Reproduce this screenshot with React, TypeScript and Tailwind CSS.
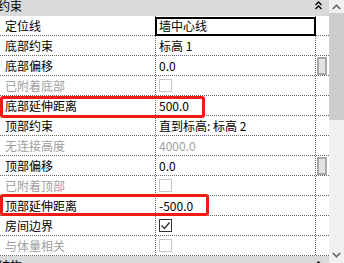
import React from "react";

const font = { fontFamily: '"Noto Sans CJK SC", "Noto Sans", sans-serif' };

function Box({ checked = false, disabled = false }: { checked?: boolean; disabled?: boolean }) {
  return (
    <div
      className={`w-[13px] h-[13px] border bg-white flex items-center justify-center ${
        disabled ? "border-[#c8c8c8]" : "border-[#333333]"
      }`}
    >
      {checked && (
        <svg width="11" height="11" viewBox="0 0 11 11">
          <polyline points="1.5,5.5 4.5,8.5 9.5,2.5" fill="none" stroke="#333" strokeWidth="1.4" />
        </svg>
      )}
    </div>
  );
}

type Row = {
  label: string;
  dim?: boolean;
  value?: string;
  valueDim?: boolean;
  box?: "off" | "on";
  btn?: boolean;
  selected?: boolean;
};

const rows: Row[] = [
  { label: "定位线", value: "墙中心线", selected: true },
  { label: "底部约束", value: "标高 1" },
  { label: "底部偏移", value: "0.0", btn: true },
  { label: "已附着底部", dim: true, box: "off" },
  { label: "底部延伸距离", value: "500.0" },
  { label: "顶部约束", value: "直到标高: 标高 2" },
  { label: "无连接高度", dim: true, value: "4000.0", valueDim: true },
  { label: "顶部偏移", value: "0.0", btn: true },
  { label: "已附着顶部", dim: true, box: "off" },
  { label: "顶部延伸距离", value: "-500.0" },
  { label: "房间边界", box: "on" },
  { label: "与体量相关", dim: true, box: "off" },
];

function DoubleUp() {
  return (
    <svg width="7" height="9" viewBox="0 0 7 9">
      <polyline points="0.5,4 3.5,1 6.5,4" fill="none" stroke="#000" strokeWidth="1.3" />
      <polyline points="0.5,8 3.5,5 6.5,8" fill="none" stroke="#000" strokeWidth="1.3" />
    </svg>
  );
}

export default function App() {
  return (
    <div className="relative w-[344px] h-[263px] overflow-hidden bg-white flex text-[12px] text-black" style={font}>
      <div className="w-[329px] h-full overflow-hidden">
        <div className="-mt-[4px]">
          <div className="relative h-[20px] bg-[#dadada] flex items-center">
            <span className="-ml-[2px] leading-none">约束</span>
            <div className="absolute left-[315px] top-[5px]">
              <DoubleUp />
            </div>
          </div>
          {rows.map((r, i) => (
            <div key={i} className="flex h-[20px] border-b border-dotted border-[#666666]">
              <div className={`w-[155px] pl-[5px] flex items-center leading-none ${r.dim ? "text-[#a0a0a0]" : ""}`}>
                {r.label}
              </div>
              <div className="relative w-[160px] border-l border-dotted border-[#666666] pl-[3px] flex items-center leading-none">
                {r.value && <span className={r.valueDim ? "text-[#a0a0a0]" : ""}>{r.value}</span>}
                {r.box && <Box checked={r.box === "on"} disabled={r.box === "off"} />}
                {r.selected && (
                  <div className="absolute left-[-1px] right-[-1px] top-[1px] h-[19px] border-2 border-black" />
                )}
              </div>
              <div className="w-[14px] border-l border-dotted border-[#666666] flex items-center pl-[1px]">
                {r.btn && <div className="w-[10px] h-[18px] bg-[#e3e3e3] border-2 border-[#a8a8a8]" />}
              </div>
            </div>
          ))}
          <div className="relative h-[20px] bg-[#dadada] flex items-center">
            <span className="-ml-[2px] leading-none">结构</span>
            <div className="absolute left-[315px] top-[5px]">
              <DoubleUp />
            </div>
          </div>
        </div>
      </div>
      <div className="w-[15px] h-full bg-[#f0f0f0] flex flex-col">
        <div className="h-[13px] flex items-center justify-center">
          <svg width="9" height="6" viewBox="0 0 9 6">
            <polyline points="0.8,5 4.5,1.3 8.2,5" fill="none" stroke="#606060" strokeWidth="1.6" />
          </svg>
        </div>
        <div className="h-[107px] bg-[#cdcdcd]" />
        <div className="flex-1" />
        <div className="h-[17px] flex items-center justify-center">
          <svg width="9" height="6" viewBox="0 0 9 6">
            <polyline points="0.8,1 4.5,4.7 8.2,1" fill="none" stroke="#606060" strokeWidth="1.6" />
          </svg>
        </div>
      </div>
      <div className="absolute left-[0px] top-[96px] w-[205px] h-[22px] border-[3px] border-[#f21a12] rounded-[3px]" />
      <div className="absolute left-[0px] top-[194px] w-[209px] h-[22px] border-[3px] border-[#f21a12] rounded-[3px]" />
    </div>
  );
}
